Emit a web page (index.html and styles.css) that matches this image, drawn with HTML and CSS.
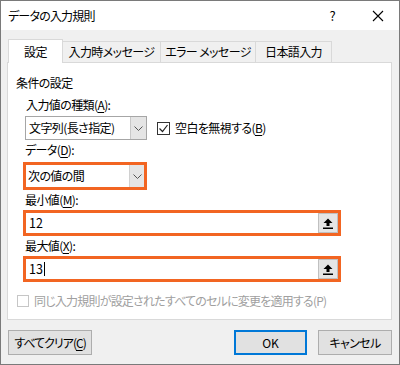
FILE: index.html
```html
<!DOCTYPE html>
<html lang="ja">
<head>
  <meta charset="UTF-8">
  <title>データの入力規則</title>
  <link rel="stylesheet" href="styles.css">
</head>
<body>
  <div class="window">
    <div class="titlebar">
      <span class="title">データの入力規則</span>
      <span class="help">?</span>
      <svg class="close" width="12" height="12" viewBox="0 0 12 12">
        <path d="M1 1 L11 11 M11 1 L1 11" stroke="#000" stroke-width="1.1" fill="none"/>
      </svg>
    </div>

    <div class="content">
      <div class="tabs">
        <div class="tab tab-active">設定</div>
        <div class="tab tab-2">入力時メッセージ</div>
        <div class="tab tab-3">エラー メッセージ</div>
        <div class="tab tab-4">日本語入力</div>
      </div>

      <div class="panel">
        <div class="legend">条件の設定</div>
        <div class="group">
          <div class="label first">入力値の種類(<u>A</u>):</div>
          <div class="row">
            <div class="combo">
              <span class="combo-text">文字列(長さ指定)</span>
              <span class="combo-btn">
                <svg width="9" height="5" viewBox="0 0 9 5"><path d="M0.5 0.5 L4.5 4.5 L8.5 0.5" stroke="#555" fill="none"/></svg>
              </span>
            </div>
            <span class="check checked">
              <svg width="11" height="11" viewBox="0 0 11 11"><path d="M1.5 5.5 L4.5 8.5 L9.5 2" stroke="#222" stroke-width="1.2" fill="none"/></svg>
            </span>
            <span class="check-label">空白を無視する(<u>B</u>)</span>
          </div>

          <div class="label">データ(<u>D</u>):</div>
          <div class="hl hl-combo">
            <span class="combo-text">次の値の間</span>
            <span class="combo-btn">
              <svg width="9" height="5" viewBox="0 0 9 5"><path d="M0.5 0.5 L4.5 4.5 L8.5 0.5" stroke="#555" fill="none"/></svg>
            </span>
          </div>

          <div class="label">最小値(<u>M</u>):</div>
          <div class="hl hl-input">
            <span class="input-text">12</span>
            <span class="ref-btn">
              <svg width="10" height="11" viewBox="0 0 10 11"><path d="M5 0.5 L9.5 5 L6.5 5 L6.5 8 L3.5 8 L3.5 5 L0.5 5 Z" fill="#000"/><rect x="0" y="9.5" width="10" height="1.5" fill="#000"/></svg>
            </span>
          </div>

          <div class="label">最大値(<u>X</u>):</div>
          <div class="hl hl-input">
            <span class="input-text">13<span class="caret"></span></span>
            <span class="ref-btn">
              <svg width="10" height="11" viewBox="0 0 10 11"><path d="M5 0.5 L9.5 5 L6.5 5 L6.5 8 L3.5 8 L3.5 5 L0.5 5 Z" fill="#000"/><rect x="0" y="9.5" width="10" height="1.5" fill="#000"/></svg>
            </span>
          </div>
        </div>

        <div class="apply-row">
          <span class="check disabled"></span>
          <span class="apply-label">同じ入力規則が設定されたすべてのセルに変更を適用する(P)</span>
        </div>
      </div>

      <div class="buttons">
        <div class="btn btn-clear">すべてクリア(<u>C</u>)</div>
        <div class="spacer"></div>
        <div class="btn btn-ok">OK</div>
        <div class="btn btn-cancel">キャンセル</div>
      </div>
    </div>
  </div>
</body>
</html>
```

FILE: styles.css
```css
* {
  margin: 0;
  padding: 0;
  box-sizing: border-box;
}
body {
  font-family: "Noto Sans CJK JP", "Noto Sans", sans-serif;
  font-size: 12px;
  font-feature-settings: "palt";
  letter-spacing: -0.6px;
  white-space: nowrap;
  color: #000;
  background-color: #f0f0f0;
}
u {
  text-decoration: underline;
  text-underline-offset: 2px;
}
.window {
  width: 400px;
  height: 365px;
  border: 1px solid #7a7a7a;
  background-color: #f0f0f0;
}
.titlebar {
  height: 29px;
  background-color: #fff;
  display: flex;
  align-items: center;
  padding-left: 7px;
}
.title {
  flex: 1;
  line-height: 16px;
  letter-spacing: -0.8px;
}
.help {
  font-size: 13px;
  margin-right: 37px;
}
.close {
  margin-right: 15px;
}
.content {
  padding: 9px 7px 0 6px;
}
.tabs {
  display: flex;
  align-items: flex-end;
  padding-left: 1px;
  height: 24px;
  margin-bottom: -1px;
}
.tab {
  height: 22px;
  line-height: 20px;
  text-align: center;
  border: 1px solid #d9d9d9;
  background-color: #f0f0f0;
  margin-left: -1px;
}
.tab-active {
  height: 24px;
  line-height: 23px;
  width: 55px;
  margin-left: 0;
  background-color: #fff;
  border-bottom: none;
  position: relative;
  z-index: 1;
}
.tab-2 {
  width: 98px;
  border-left: none;
  margin-left: 0;
}
.tab-3 {
  width: 96px;
}
.tab-4 {
  width: 77px;
}
.panel {
  height: 258px;
  background-color: #fff;
  border: 1px solid #d9d9d9;
}
.legend {
  margin-top: 12px;
  padding-left: 8px;
  line-height: 16px;
}
.group {
  padding-left: 17px;
}
.label {
  line-height: 16px;
  margin-top: 2px;
}
.label.first {
  margin-top: 6px;
  padding-left: 1px;
}
.row {
  display: flex;
  align-items: center;
  margin-top: 3px;
}
.combo {
  width: 122px;
  height: 24px;
  border: 1px solid #a6a6a6;
  display: flex;
  align-items: stretch;
}
.combo-text {
  flex: 1;
  padding-left: 3px;
  line-height: 22px;
}
.combo-btn {
  width: 16px;
  background-color: #e5e5e5;
  border-left: 1px solid #c8c8c8;
  display: flex;
  align-items: center;
  justify-content: center;
}
.check {
  width: 13px;
  height: 13px;
  border: 1px solid #333;
  background-color: #fff;
  display: flex;
  align-items: center;
  justify-content: center;
}
.checked {
  margin-left: 10px;
}
.check-label {
  margin-left: 5px;
  line-height: 16px;
}
.hl {
  border: 3px solid #f26522;
  display: flex;
  align-items: stretch;
  margin-left: -2px;
  margin-top: 4px;
}
.hl-combo {
  width: 124px;
  height: 28px;
}
.hl-combo .combo-text {
  padding-left: 2px;
}
.hl-combo .combo-btn {
  width: 15px;
  border-left: 1px solid #d0d0d0;
}
.hl-input {
  width: 318px;
  height: 26px;
  margin-top: 2px;
}
.input-text {
  flex: 1;
  padding-left: 3px;
  line-height: 20px;
  font-size: 12.5px;
  letter-spacing: 0;
  display: flex;
  align-items: center;
}
.caret {
  width: 1px;
  height: 14px;
  background-color: #000;
  margin-left: 1px;
}
.ref-btn {
  width: 20px;
  background-color: #e5e5e5;
  border: 1px solid #c0c0c0;
  display: flex;
  align-items: center;
  justify-content: center;
}
.apply-row {
  display: flex;
  align-items: center;
  margin-top: 11px;
  padding-left: 9px;
}
.check.disabled {
  width: 12px;
  height: 12px;
  border-color: #c6c6c6;
}
.apply-label {
  margin-left: 5px;
  color: #a0a0a0;
  line-height: 16px;
  letter-spacing: -0.8px;
}
.buttons {
  display: flex;
  margin-top: 10px;
  padding-left: 1px;
}
.btn {
  height: 25px;
  background-color: #e1e1e1;
  border: 1px solid #adadad;
  text-align: center;
  line-height: 23px;
}
.btn-clear {
  width: 84px;
  letter-spacing: -1px;
}
.spacer {
  flex: 1;
}
.btn-ok {
  width: 73px;
  border: 2px solid #0078d7;
  line-height: 21px;
  margin-right: 11px;
  letter-spacing: 0;
}
.btn-cancel {
  width: 74px;
}
```
